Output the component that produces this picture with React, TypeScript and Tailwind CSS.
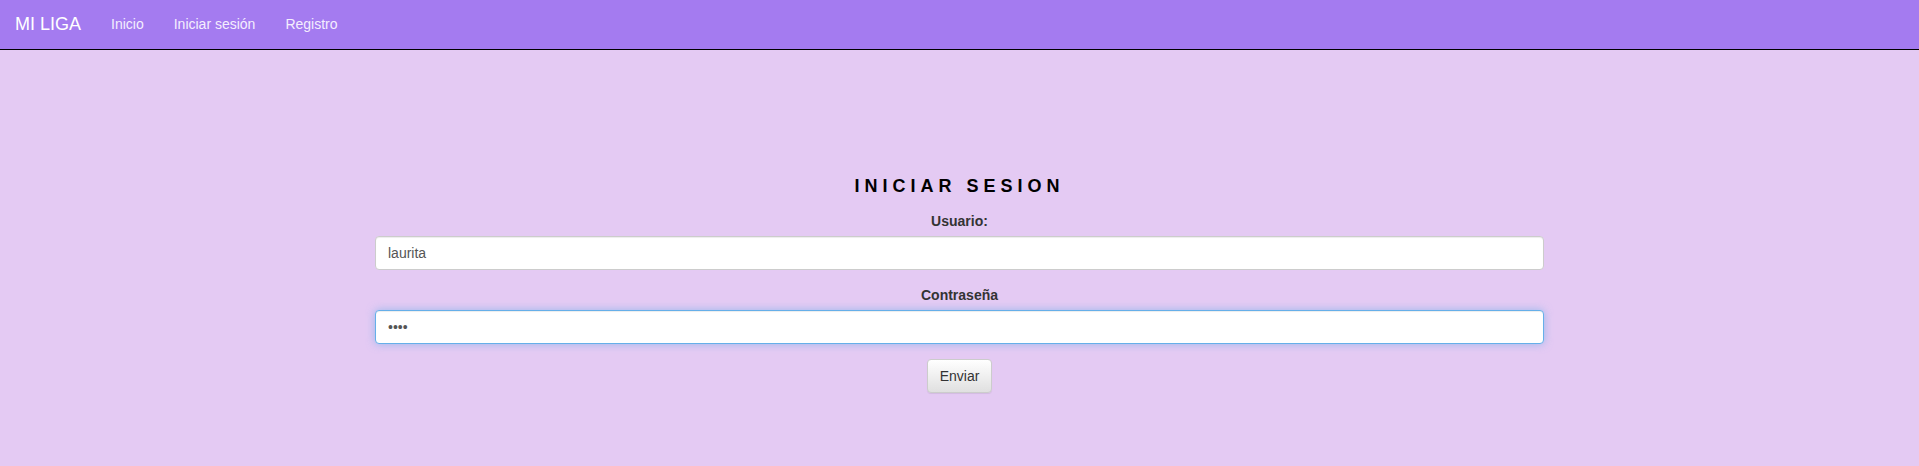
import React, { useState } from "react";

const App = () => {
  const [usuario, setUsuario] = useState("laurita");
  const [password, setPassword] = useState("1234");

  return (
    <div
      className="min-h-[466px] w-full bg-[#e4caf3] text-[14px] text-[#333]"
      style={{ fontFamily: '"Liberation Sans", Arial, sans-serif' }}
    >
      {/* Navbar */}
      <nav className="flex h-[50px] items-center border-b border-black bg-[#a47bf0] px-[15px]">
        <a href="#" className="pr-[15px] text-[18px] text-white">
          MI LIGA
        </a>
        <ul className="flex">
          <li>
            <a href="#" className="block px-[15px] text-[#f4eefe]">
              Inicio
            </a>
          </li>
          <li>
            <a href="#" className="block px-[15px] text-[#f4eefe]">
              Iniciar sesión
            </a>
          </li>
          <li>
            <a href="#" className="block px-[15px] text-[#f4eefe]">
              Registro
            </a>
          </li>
        </ul>
      </nav>

      {/* Form */}
      <div className="mx-auto w-[1169px] pt-[126px] text-center">
        <h2 className="mb-[15px] text-[18px] font-bold leading-[20px] tracking-[5px] text-black">
          INICIAR SESION
        </h2>
        <form onSubmit={(e) => e.preventDefault()}>
          <div className="mb-[15px] flex flex-col">
            <label htmlFor="usuario" className="mb-[5px] font-bold leading-[20px]">
              Usuario:
            </label>
            <input
              id="usuario"
              type="text"
              value={usuario}
              onChange={(e) => setUsuario(e.target.value)}
              className="h-[34px] rounded-[4px] border border-[#ccc] bg-white px-[12px] text-[14px] text-[#555] shadow-[inset_0_1px_1px_rgba(0,0,0,0.075)] outline-none"
            />
          </div>
          <div className="mb-[15px] flex flex-col">
            <label htmlFor="password" className="mb-[5px] font-bold leading-[20px]">
              Contraseña
            </label>
            <input
              id="password"
              type="password"
              value={password}
              onChange={(e) => setPassword(e.target.value)}
              className="h-[34px] rounded-[4px] border border-[#66afe9] bg-white px-[12px] text-[14px] text-[#555] shadow-[inset_0_1px_1px_rgba(0,0,0,0.075),0_0_8px_rgba(102,175,233,0.6)] outline-none"
            />
          </div>
          <button
            type="submit"
            className="h-[34px] rounded-[4px] border border-[#ccc] bg-gradient-to-b from-white to-[#e0e0e0] px-[12px] text-[14px] text-[#333] shadow-[inset_0_1px_0_rgba(255,255,255,0.15),0_1px_1px_rgba(0,0,0,0.075)]"
          >
            Enviar
          </button>
        </form>
      </div>
    </div>
  );
};

export default App;
